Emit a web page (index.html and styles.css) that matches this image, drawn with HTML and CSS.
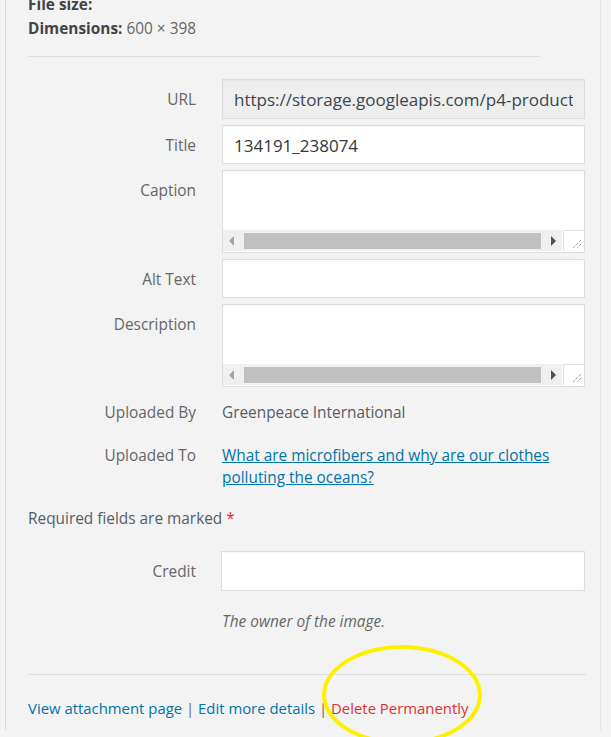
FILE: index.html
```html
<!DOCTYPE html>
<html lang="en">
<head>
<meta charset="utf-8">
<title>Attachment details</title>
<link rel="stylesheet" href="styles.css">
</head>
<body>
<div class="panel">
  <div class="meta">
    <div class="meta-line"><strong>File size:</strong></div>
    <div class="meta-line"><strong>Dimensions:</strong> 600 × 398</div>
  </div>
  <hr class="sep sep-top">

  <div class="fields">
    <div class="row">
      <label class="lbl">URL</label>
      <div class="input input-ro"><div class="clip">https://storage.googleapis.com/p4-production-content/international/wp-content/uploads/2017/12/134191_238074.jpg</div></div>
    </div>
    <div class="row">
      <label class="lbl">Title</label>
      <div class="input input-title"><div class="clip">134191_238074</div></div>
    </div>
    <div class="row">
      <label class="lbl">Caption</label>
      <div class="textarea">
        <div class="ta-body"></div>
        <div class="ta-scroll">
          <div class="hbar">
            <span class="arr arr-l"></span>
            <span class="thumb"></span>
            <span class="arr arr-r"></span>
          </div>
          <div class="resizer">
            <svg width="12" height="12" viewBox="0 0 12 12"><path d="M11 3 L3 11 M11 7 L7 11" stroke="#777" stroke-width="1" stroke-dasharray="1 1" fill="none"/></svg>
          </div>
        </div>
      </div>
    </div>
    <div class="row">
      <label class="lbl">Alt Text</label>
      <div class="input input-alt"></div>
    </div>
    <div class="row">
      <label class="lbl">Description</label>
      <div class="textarea">
        <div class="ta-body"></div>
        <div class="ta-scroll">
          <div class="hbar">
            <span class="arr arr-l"></span>
            <span class="thumb"></span>
            <span class="arr arr-r"></span>
          </div>
          <div class="resizer">
            <svg width="12" height="12" viewBox="0 0 12 12"><path d="M11 3 L3 11 M11 7 L7 11" stroke="#777" stroke-width="1" stroke-dasharray="1 1" fill="none"/></svg>
          </div>
        </div>
      </div>
    </div>
    <div class="row row-info row-by">
      <span class="lbl">Uploaded By</span>
      <span class="val">Greenpeace International</span>
    </div>
    <div class="row row-info row-to">
      <span class="lbl">Uploaded To</span>
      <span class="val"><a href="#" class="link">What are microfibers and why are our clothes polluting the oceans?</a></span>
    </div>
  </div>

  <p class="required">Required fields are marked <span class="star">*</span></p>

  <div class="row row-credit">
    <label class="lbl">Credit</label>
    <div class="input input-credit"></div>
  </div>
  <div class="row row-desc">
    <span class="lbl"></span>
    <em class="help">The owner of the image.</em>
  </div>

  <hr class="sep sep-bottom">

  <div class="actions">
    <a href="#" class="act">View attachment page</a> <span class="pipe">|</span> <a href="#" class="act">Edit more details</a> <span class="pipe">|</span> <a href="#" class="act del">Delete Permanently</a>
    <span class="highlight"></span>
  </div>
</div>
</body>
</html>
```

FILE: styles.css
```css
html, body {
  margin: 0;
  padding: 0;
}
body {
  background: #f4f4f4;
  font-family: "Open Sans", "Noto Sans", sans-serif;
  font-size: 15.4px;
  color: #555d66;
  width: 611px;
  height: 737px;
  overflow: hidden;
}
.panel {
  position: relative;
  margin-left: 5px;
  width: 596px;
  height: 737px;
  box-sizing: border-box;
  border-left: 1px solid #dcdcdc;
  border-right: 1px solid #e4e4e4;
  background: #f3f3f3;
  padding-left: 22px;
}
.meta {
  margin-top: -7px;
}
.meta-line {
  line-height: 24px;
  color: #666;
}
.meta-line strong {
  color: #444;
  font-weight: 700;
}
.sep {
  border: 0;
  height: 1px;
  background: #dddddd;
  margin: 0;
}
.sep-top {
  width: 512px;
  margin-top: 15px;
}
.fields {
  margin-top: 22px;
  display: flex;
  flex-direction: column;
  gap: 6px;
}
.row {
  display: grid;
  grid-template-columns: 168px 363px;
  column-gap: 26px;
  align-items: start;
}
.lbl {
  text-align: right;
  line-height: 22px;
  padding-top: 10px;
  color: #666;
}
.input, .textarea {
  box-sizing: border-box;
  border: 1px solid #dddddd;
  background: #ffffff;
  box-shadow: inset 0 1px 2px rgba(0,0,0,0.04);
}
.input {
  height: 39px;
  padding: 0 11px;
  line-height: 39px;
  font-size: 17px;
  color: #32373c;
  white-space: nowrap;
}
.clip {
  overflow: hidden;
  white-space: nowrap;
}
.input-ro {
  height: 40px;
  line-height: 39px;
  background: #eeeeee;
  color: #3d4650;
}
.input-title {
  color: #32373c;
}
.textarea {
  height: 83px;
  display: flex;
  flex-direction: column;
}
.ta-body {
  flex: 1;
}
.ta-scroll {
  height: 21px;
  display: flex;
  align-items: stretch;
  margin-bottom: 1px;
}
.hbar {
  flex: 1;
  background: #f0f0f0;
  display: flex;
  align-items: center;
  padding: 0 6px 0 6px;
}
.arr {
  width: 0;
  height: 0;
  border-top: 5px solid transparent;
  border-bottom: 5px solid transparent;
}
.arr-l {
  border-right: 5px solid #a3a3a3;
  margin-right: 10px;
}
.arr-r {
  border-left: 5px solid #505050;
  margin-left: 10px;
}
.thumb {
  flex: 1;
  height: 16px;
  background: #c1c1c1;
}
.resizer {
  width: 21px;
  box-sizing: border-box;
  background: #ffffff;
  border-left: 1px solid #e0e0e0;
  border-top: 1px solid #e0e0e0;
  margin-left: 1px;
  display: flex;
  align-items: flex-end;
  justify-content: flex-end;
  padding: 0 2px 2px 0;
}
.row-info .lbl {
  padding-top: 0;
}
.row-by {
  margin-top: 9px;
}
.row-to {
  margin-top: 15px;
}
.val {
  line-height: 22px;
  color: #555d66;
}
.link {
  color: #0073aa;
  text-decoration: underline;
}
.required {
  margin: 19px 0 0 0;
  line-height: 22px;
  color: #555d66;
}
.star {
  color: #dc3232;
}
.row-credit {
  margin-top: 21px;
  grid-template-columns: 168px 364px;
  column-gap: 25px;
}
.row-credit .lbl {
  padding-top: 10px;
}
.input-credit {
  height: 40px;
}
.row-desc {
  margin-top: 20px;
}
.row-desc .lbl {
  padding-top: 0;
}
.help {
  line-height: 22px;
  color: #666;
  font-style: italic;
}
.sep-bottom {
  width: 558px;
  margin-top: 41px;
}
.actions {
  position: relative;
  margin-top: 22px;
  line-height: 22px;
  font-size: 14.9px;
  color: #666;
}
.act {
  color: #0073aa;
  text-decoration: none;
}
.del {
  color: #dc3232;
}
.pipe {
  color: #666;
}
.highlight {
  position: absolute;
  left: 294px;
  top: -52px;
  width: 160px;
  height: 100px;
  box-sizing: border-box;
  border: 4px solid #fdf100;
  border-radius: 50%;
  pointer-events: none;
}
```
